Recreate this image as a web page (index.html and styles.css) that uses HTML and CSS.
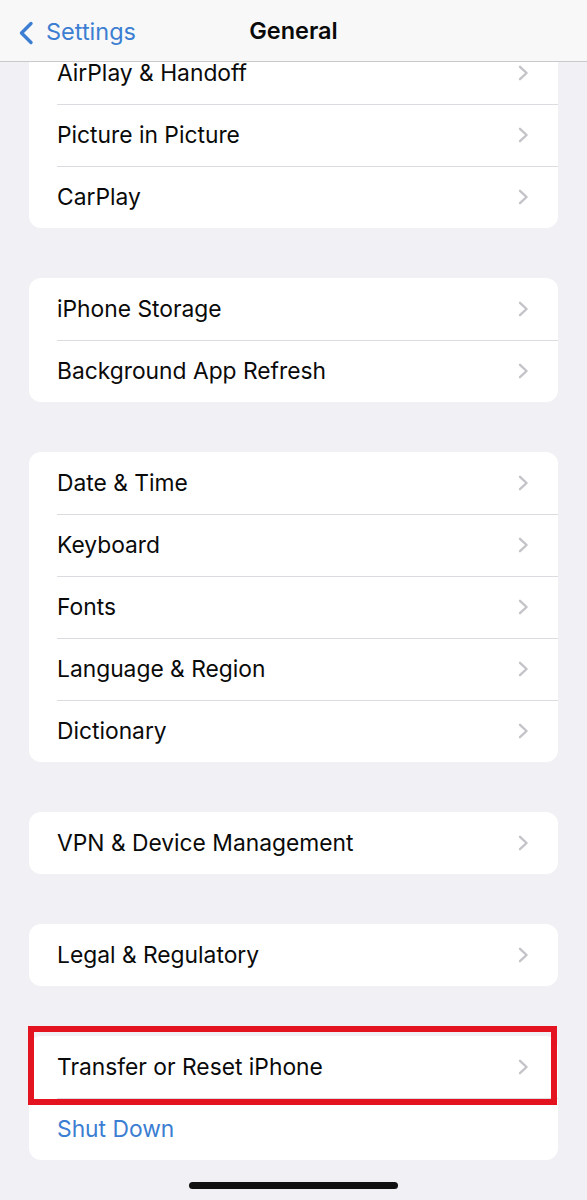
FILE: index.html
```html
<!DOCTYPE html>
<html lang="en">
<head>
    <meta charset="UTF-8">
    <meta name="viewport" content="width=device-width, initial-scale=1.0">
    <title>General</title>
    <link rel="stylesheet" href="styles.css">
</head>
<body>
    <div class="screen">
        <header class="navbar">
            <a class="back" href="#">
                <svg class="back-icon" width="16" height="24" viewBox="0 0 16 24">
                    <path d="M13 2.5 L3.5 12 L13 21.5" fill="none" stroke="currentColor" stroke-width="3.4" stroke-linecap="round" stroke-linejoin="round"/>
                </svg>
                <span>Settings</span>
            </a>
            <h1 class="title">General</h1>
        </header>

        <main class="content">
            <section class="group group-first">
                <div class="row"><span class="label">AirPlay &amp; Handoff</span><svg class="chevron" viewBox="0 0 11 16"><path d="M2 1.8 L8.6 8 L2 14.2"/></svg></div>
                <div class="row"><span class="label">Picture in Picture</span><svg class="chevron" viewBox="0 0 11 16"><path d="M2 1.8 L8.6 8 L2 14.2"/></svg></div>
                <div class="row"><span class="label">CarPlay</span><svg class="chevron" viewBox="0 0 11 16"><path d="M2 1.8 L8.6 8 L2 14.2"/></svg></div>
            </section>

            <section class="group">
                <div class="row"><span class="label">iPhone Storage</span><svg class="chevron" viewBox="0 0 11 16"><path d="M2 1.8 L8.6 8 L2 14.2"/></svg></div>
                <div class="row"><span class="label">Background App Refresh</span><svg class="chevron" viewBox="0 0 11 16"><path d="M2 1.8 L8.6 8 L2 14.2"/></svg></div>
            </section>

            <section class="group">
                <div class="row"><span class="label">Date &amp; Time</span><svg class="chevron" viewBox="0 0 11 16"><path d="M2 1.8 L8.6 8 L2 14.2"/></svg></div>
                <div class="row"><span class="label">Keyboard</span><svg class="chevron" viewBox="0 0 11 16"><path d="M2 1.8 L8.6 8 L2 14.2"/></svg></div>
                <div class="row"><span class="label">Fonts</span><svg class="chevron" viewBox="0 0 11 16"><path d="M2 1.8 L8.6 8 L2 14.2"/></svg></div>
                <div class="row"><span class="label">Language &amp; Region</span><svg class="chevron" viewBox="0 0 11 16"><path d="M2 1.8 L8.6 8 L2 14.2"/></svg></div>
                <div class="row"><span class="label">Dictionary</span><svg class="chevron" viewBox="0 0 11 16"><path d="M2 1.8 L8.6 8 L2 14.2"/></svg></div>
            </section>

            <section class="group">
                <div class="row"><span class="label">VPN &amp; Device Management</span><svg class="chevron" viewBox="0 0 11 16"><path d="M2 1.8 L8.6 8 L2 14.2"/></svg></div>
            </section>

            <section class="group">
                <div class="row"><span class="label">Legal &amp; Regulatory</span><svg class="chevron" viewBox="0 0 11 16"><path d="M2 1.8 L8.6 8 L2 14.2"/></svg></div>
            </section>

            <section class="group">
                <div class="row highlighted"><span class="label">Transfer or Reset iPhone</span><svg class="chevron" viewBox="0 0 11 16"><path d="M2 1.8 L8.6 8 L2 14.2"/></svg></div>
                <div class="row"><span class="label action">Shut Down</span></div>
            </section>
        </main>

        <div class="home-indicator"></div>
    </div>
</body>
</html>
```

FILE: styles.css
```css
body {
    margin: 0;
    background-color: #f0f0f5;
    font-family: Inter, "Noto Sans", sans-serif;
    color: #0a0a0a;
}
.screen {
    position: relative;
    width: 587px;
    height: 1200px;
    overflow: hidden;
}
.navbar {
    position: absolute;
    top: 0;
    left: 0;
    right: 0;
    height: 61px;
    background-color: #f8f8f8;
    border-bottom: 1px solid #c9c9cc;
    z-index: 2;
}
.back {
    position: absolute;
    left: 18px;
    top: 17px;
    display: flex;
    align-items: center;
    gap: 12px;
    color: #3b7ed2;
    text-decoration: none;
    font-size: 23.5px;
}
.back-icon {
    margin-top: 2px;
}
.title {
    margin: 0;
    text-align: center;
    line-height: 61px;
    font-size: 23.5px;
    font-weight: 600;
    color: #0a0a0a;
}
.content {
    padding: 42px 29px 0;
    display: flex;
    flex-direction: column;
    gap: 50px;
}
.group {
    background-color: #fff;
    border-radius: 12px;
}
.group-first {
    border-radius: 0 0 12px 12px;
}
.row {
    position: relative;
    box-sizing: border-box;
    height: 62px;
    display: flex;
    align-items: center;
    justify-content: space-between;
    padding: 0 29px 2px 28px;
    font-size: 22.8px;
}
.row + .row::before {
    content: "";
    position: absolute;
    top: 0;
    left: 28px;
    right: 0;
    height: 1px;
    background-color: #dcdce0;
}
.chevron {
    width: 11px;
    height: 16px;
    margin-top: 2px;
    fill: none;
    stroke: #c4c4c8;
    stroke-width: 2.4;
    stroke-linecap: round;
    stroke-linejoin: round;
}
.action {
    color: #3b7ed2;
}
.highlighted::after {
    content: "";
    position: absolute;
    top: -10px;
    bottom: -7px;
    left: -1px;
    right: 1px;
    border: 6px solid #e3141f;
    z-index: 1;
}
.home-indicator {
    position: absolute;
    left: 189px;
    top: 1182px;
    width: 209px;
    height: 7px;
    border-radius: 4px;
    background-color: #111;
}
```
